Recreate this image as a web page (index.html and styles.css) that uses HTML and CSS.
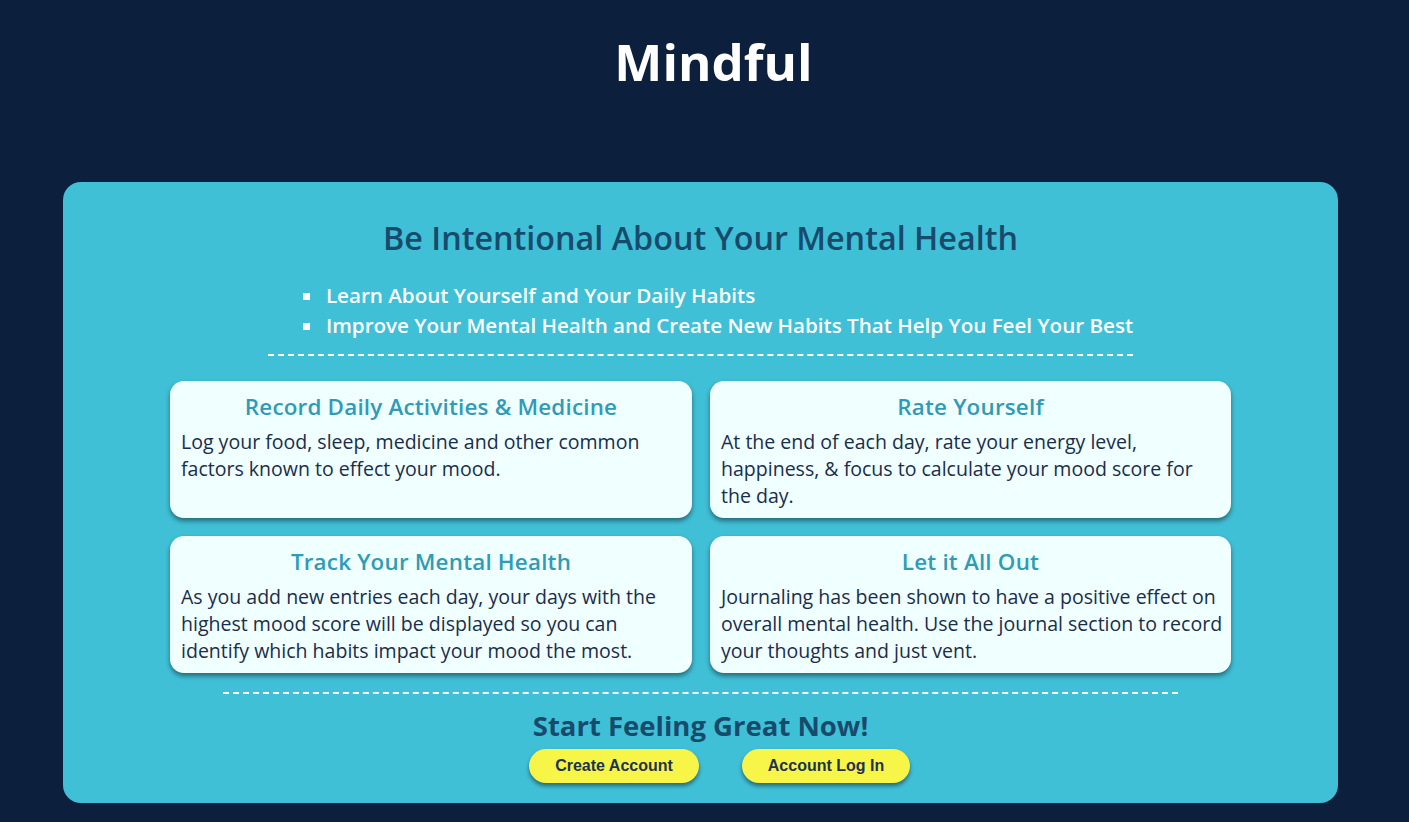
FILE: index.html
```html
<!DOCTYPE html>
<html lang="en">
<head>
<meta charset="utf-8">
<title>Mindful</title>
<link rel="stylesheet" href="styles.css">
</head>
<body>
<header class="site-header">
  <h1 class="brand">Mindful</h1>
</header>
<main class="panel">
  <h2 class="panel-title">Be Intentional About Your Mental Health</h2>
  <ul class="benefits">
    <li>Learn About Yourself and Your Daily Habits</li>
    <li>Improve Your Mental Health and Create New Habits That Help You Feel Your Best</li>
  </ul>
  <section class="features">
    <article class="feature">
      <h3 class="feature-title">Record Daily Activities &amp; Medicine</h3>
      <p class="feature-text">Log your food, sleep, medicine and other common factors known to effect your mood.</p>
    </article>
    <article class="feature">
      <h3 class="feature-title">Rate Yourself</h3>
      <p class="feature-text">At the end of each day, rate your energy level, happiness, &amp; focus to calculate your mood score for the day.</p>
    </article>
    <article class="feature">
      <h3 class="feature-title">Track Your Mental Health</h3>
      <p class="feature-text">As you add new entries each day, your days with the highest mood score will be displayed so you can identify which habits impact your mood the most.</p>
    </article>
    <article class="feature">
      <h3 class="feature-title">Let it All Out</h3>
      <p class="feature-text">Journaling has been shown to have a positive effect on overall mental health. Use the journal section to record your thoughts and just vent.</p>
    </article>
  </section>
  <section class="cta">
    <h2 class="cta-title">Start Feeling Great Now!</h2>
    <div class="cta-buttons">
      <button class="btn" type="button">Create Account</button>
      <button class="btn" type="button">Account Log In</button>
    </div>
  </section>
</main>
</body>
</html>
```
FILE: styles.css
```css
html, body {
  margin: 0;
  padding: 0;
}

body {
  background: #0c1f3c;
  font-family: "Open Sans", "Noto Sans", sans-serif;
  min-height: 822px;
}

.site-header {
  display: flex;
  justify-content: center;
  padding: 28px 0 0 18px;
  height: 154px;
  box-sizing: border-box;
}

.brand {
  margin: 0;
  color: #ffffff;
  font-size: 51px;
  font-weight: 700;
  line-height: 66px;
}

.panel {
  width: 1275px;
  margin: 28px 0 0 63px;
  box-sizing: border-box;
  background: #40c0d7;
  border-radius: 18px;
  padding: 34px 0 20px;
  display: flex;
  flex-direction: column;
  align-items: center;
}

.panel-title {
  margin: 0;
  color: #184a6c;
  font-size: 32.3px;
  font-weight: 600;
  line-height: 42px;
}

.benefits {
  margin: 22px 0 0;
  padding: 0 0 14px 56px;
  list-style: square;
  color: #ffffff;
  font-size: 20.6px;
  font-weight: 600;
  line-height: 30px;
  border-bottom: 2px dashed #ffffff;
}

.benefits li {
  padding-left: 2px;
}

.features {
  margin-top: 25px;
  width: 1061px;
  display: grid;
  grid-template-columns: 522px 521px;
  grid-auto-rows: 137px;
  gap: 18px;
}

.feature {
  background: #f0ffff;
  border-radius: 14px;
  box-shadow: 0 3px 5px rgba(0, 0, 0, 0.45);
  padding: 13px 8px 13px 11px;
  box-sizing: border-box;
}

.feature-title {
  margin: 0 3px 0 0;
  text-align: center;
  color: #2f9bb6;
  font-size: 22.4px;
  font-weight: 600;
  line-height: 26px;
  letter-spacing: 0.2px;
}

.feature-text {
  margin: 8px 0 0;
  color: #1a2d4b;
  font-size: 19.55px;
  font-weight: 500;
  line-height: 27px;
}

.cta {
  margin-top: 19px;
  width: 955px;
  border-top: 2px dashed #ffffff;
  display: flex;
  flex-direction: column;
  align-items: center;
}

.cta-title {
  margin: 14px 0 0;
  color: #184a6c;
  font-size: 27.5px;
  font-weight: 700;
  line-height: 36px;
}

.cta-buttons {
  display: flex;
  gap: 43px;
  margin-top: 5px;
  padding-left: 38px;
}

.btn {
  font-family: "Liberation Sans", Arial, sans-serif;
  font-weight: 700;
  font-size: 16px;
  color: #1e3352;
  background: #f7f548;
  border: none;
  border-radius: 17px;
  height: 34px;
  width: 170px;
  box-shadow: 0 3px 4px rgba(0, 0, 0, 0.45);
  padding: 0;
}

.btn + .btn {
  width: 168px;
}
```
